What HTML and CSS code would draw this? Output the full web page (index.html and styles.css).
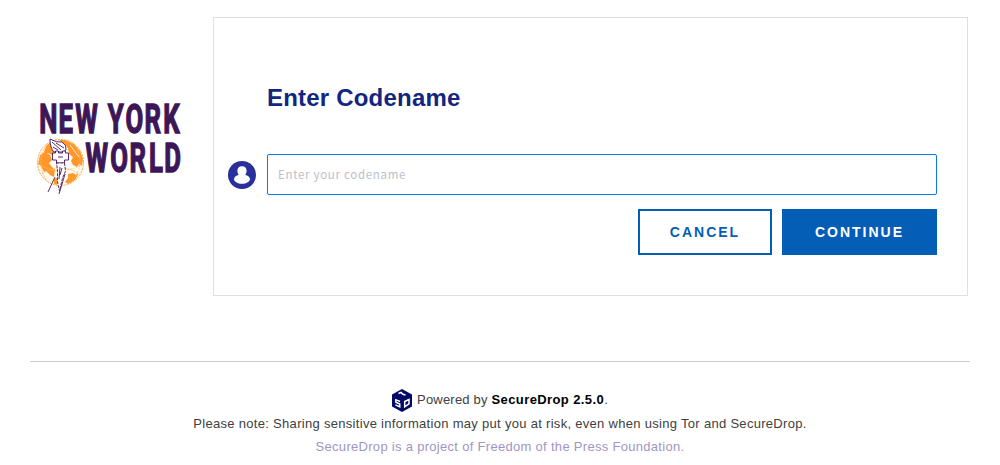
FILE: index.html
```
<!DOCTYPE html>
<html lang="en">
<head>
<meta charset="utf-8">
<title>Enter Codename | SecureDrop</title>
<link rel="stylesheet" href="styles.css">
</head>
<body>
<div class="content">
  <header class="brand">
    <svg class="logo" viewBox="30 95 160 105" width="160" height="105" role="img" aria-label="New York World">
      <g class="logo-text">
        <text transform="translate(0 133.2) scale(.62 1)" x="63.500 94.500 121.500 165 174 202.500 233 263.500" y="0">NEW YORK</text>
        <text transform="translate(0 172.2) scale(.62 1)" x="138 178 209 240.500 265" y="0">WORLD</text>
      </g>
      <circle cx="60.500" cy="162.500" r="23" fill="#fffaf3" stroke="#ff9e35" stroke-width="1" stroke-dasharray="2 1"/>
      <g fill="#ff9829">
        <path d="M46 146l6-5v7l3 5-3 2-4-2-5 2zM59 140l6 0 9 4 6 7 3 8-1 7-3-2-2 3-4-2-2-4 2-4-4-3-1-6-5-5zM40 155l5-3 5 3 2 5-3 3 3 4 1 7-5-4-4 2-3-6-3-2zM45 168l6-2 4 4-1 7-4-2-3-3zM68 174l5-1 3 2 3-2-4 7-7 4-3-2 3-4z"/>
        <path d="M54 179l3-1v7l-3-1z"/>
      </g>
      <g fill="none" stroke="#ffb765" stroke-width=".8" stroke-dasharray="2 1">
        <path d="M38 164q22 13 45 0M47 144q-12 18 0 37M73 143q14 18 0 37M42 174q19-12 37 0"/>
      </g>
      <path d="M70 145l9 12M74 166l5 5M67 162l8 8" stroke="#fff" stroke-width=".8"/>
      <g fill="#fff" stroke="#43165a" stroke-width=".9">
        <path d="M50 139q7 4 12 3 5 3 4 8l-3 2H54q-4-4-4-13z"/>
        <path d="M52.500 153h3v-2h3v2h4v-2h3v2h3v7h-4v3h-8v-3h-4z"/>
        <path d="M56.500 163h8l1 8-3 7-3 13-2-9v-12z" stroke-dasharray="3 1"/>
      </g>
      <path d="M52 142l9 8M56 143l8 5M53 147l5 3M60 167l-1 12M62 168l-2 7M55 177l-7 15M65 174l-6 20M58 157h5" fill="none" stroke="#43165a" stroke-width=".9"/>
    </svg>
  </header>
  <main class="card">
    <h1>Enter Codename</h1>
    <form>
      <div class="field">
        <svg class="user-icon" viewBox="0 0 28 28" width="28" height="28">
          <circle cx="14" cy="14" r="14" fill="#2a309b"/>
          <path d="M14 5.300c3 0 4.600 2 4.600 4.600 0 1.800-.8 3-1.300 4 2.600.6 4.700 2 4.700 4.100 0 2.600-3.700 4.800-8 4.800s-8-2.200-8-4.800c0-2.100 2.100-3.500 4.700-4.100-.5-1-1.300-2.200-1.300-4 0-2.600 1.600-4.600 4.600-4.600z" fill="#fff"/>
        </svg>
        <input type="text" placeholder="Enter your codename" aria-label="Enter your codename">
      </div>
      <div class="buttons">
        <button type="button" class="cancel">CANCEL</button>
        <button type="button" class="continue">CONTINUE</button>
      </div>
    </form>
  </main>
</div>
<footer>
  <p class="powered">
    <svg viewBox="0 0 20 23" width="20" height="23">
      <path d="M10 0l10 5.500v12L10 23 0 17.500v-12z" fill="#000a66"/>
      <path d="M6.500 4.500l2.500-1 2 1.800 2.500.7" fill="none" stroke="#fff" stroke-width="1.600"/>
      <path d="M8 12.500l-4.200-1.800v2.500l4 1.800v2.800l-4.400-2" fill="none" stroke="#fff" stroke-width="1.400"/>
      <path d="M12.700 12.500l4.300-2v4.300l-4.300 3z" fill="none" stroke="#fff" stroke-width="1.500"/>
    </svg>
    <span>Powered by <strong>SecureDrop 2.5.0</strong>.</span>
  </p>
  <p class="note">Please note: Sharing sensitive information may put you at risk, even when using Tor and SecureDrop.</p>
  <p class="project">SecureDrop is a project of Freedom of the Press Foundation.</p>
</footer>
</body>
</html>
```
FILE: styles.css
```
* { box-sizing: border-box; }
body {
  margin: 0;
  padding: 17px 30px 0;
  background: #fff;
  font-family: "Liberation Sans", Arial, sans-serif;
}
.content { display: flex; }
.brand { width: 183px; padding-top: 78px; }
.logo { display: block; overflow: visible; }
.logo-text {
  font: 700 41.500px Roboto, sans-serif;
  fill: #3d1657;
  stroke: #3d1657;
  stroke-width: 1.500px;
}
.card {
  width: 755px;
  height: 279px;
  border: 1px solid #dfdfdf;
  padding: 65px 30px 0 14px;
}
h1 {
  margin: 0 0 41px 39px;
  font-size: 24px;
  line-height: 30px;
  letter-spacing: .2px;
  color: #12267f;
}
.field { display: flex; align-items: center; gap: 11px; }
.user-icon { flex: none; }
.field input {
  width: 670px;
  height: 41px;
  padding: 0 10px 1px;
  border: 1px solid #0c7be8;
  border-radius: 2px;
  background: #fff;
  font: 11.500px "Noto Sans CJK SC", sans-serif;
  letter-spacing: .7px;
}
.field input::placeholder { color: #bebec8; opacity: 1; }
.buttons { display: flex; justify-content: flex-end; gap: 10px; margin-top: 14px; }
button {
  height: 46px;
  padding: 0;
  border: 2px solid #045eb6;
  font: bold 14px "Liberation Sans", Arial, sans-serif;
  letter-spacing: 2px;
}
.cancel { width: 134px; background: #fff; color: #045eb6; }
.continue { width: 155px; background: #045eb6; color: #fff; }
footer {
  margin-top: 65px;
  padding-top: 26px;
  border-top: 1px solid #ccc;
  text-align: center;
  font-size: 13px;
  line-height: 23px;
  letter-spacing: .3px;
  color: #404040;
}
footer p { margin: 0; }
.powered { display: flex; justify-content: center; gap: 5px; height: 24px; padding-top: 1px; }
.powered span { line-height: 21px; letter-spacing: .2px; }
.powered strong { color: #000; letter-spacing: .4px; }
.project { color: #a096c1; }
```
